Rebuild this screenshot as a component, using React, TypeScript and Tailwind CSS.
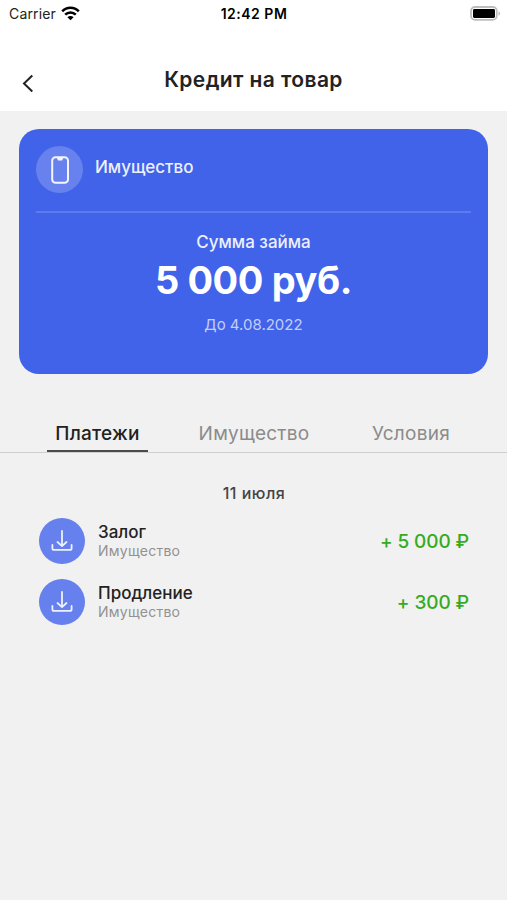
const payments = [
  { amount: "+ 5 000 ₽", id: "pledge", title: "Залог" },
  { amount: "+ 300 ₽", id: "extension", title: "Продление" },
];

const tabs = [
  { label: "Платежи", width: "w-[101px] ml-[47px]" },
  { label: "Имущество", width: "w-[112px] ml-[50px]" },
  { label: "Условия", width: "w-[80px] ml-[61px]" },
];

const WifiIcon = () => (
  <svg className="h-[15px] w-[19px]" fill="none" viewBox="0 0 19 15">
    <path
      d="M1.2 5.3C5.8.6 13.2.6 17.8 5.3M4.2 8.6c2.9-2.9 7.7-2.9 10.6 0"
      stroke="black"
      strokeWidth="2.6"
    />
    <path d="M6.4 11.2c1.8-1.6 4.4-1.6 6.2 0L9.5 14.3z" fill="black" />
  </svg>
);

const BatteryIcon = () => (
  <svg className="h-[15px] w-[31px]" fill="none" viewBox="0 0 31 15">
    <rect
      height="12.8"
      rx="4"
      stroke="#bdbdbd"
      strokeWidth="1.8"
      width="25.8"
      x="1"
      y="1"
    />
    <rect fill="black" height="9" rx="1.4" width="22" x="3" y="3" />
    <path d="M28.5 5.3c2.2.9 2.2 3.5 0 4.4z" fill="#bdbdbd" />
  </svg>
);

const PhoneIcon = () => (
  <svg className="h-7 w-5" fill="none" viewBox="0 0 20 28">
    <rect
      height="25.6"
      rx="3.4"
      stroke="#f3f5ff"
      strokeWidth="2"
      width="15.8"
      x="2.2"
      y="1.2"
    />
    <path d="M6.8 1.5h6.6l-1.2 3.1H8z" fill="#f3f5ff" />
  </svg>
);

const DownloadIcon = () => (
  <svg
    className="h-6 w-6"
    fill="none"
    stroke="#edf1ff"
    strokeLinecap="round"
    strokeLinejoin="round"
    strokeWidth="1.8"
    viewBox="0 0 24 24"
  >
    <path d="M12 2v15M7.5 13l4.5 4.1 4.5-4.1M2.4 16v3.2a1.7 1.7 0 0 0 1.7 1.7h15.8a1.7 1.7 0 0 0 1.7-1.7V16" />
  </svg>
);

const StatusBar = () => (
  <div className="grid h-7 grid-cols-3 items-center pr-[6px] pb-[2px] pl-[9px] text-[14px] text-black">
    <div className="flex items-center gap-[5px]">
      <span className="tracking-[0.15px] text-[#222]">Carrier</span>
      <WifiIcon />
    </div>
    <span className="pr-[2px] text-center font-semibold tracking-[0.5px]">
      12:42 PM
    </span>
    <div className="flex justify-end">
      <BatteryIcon />
    </div>
  </div>
);

const Header = () => (
  <header className="bg-white">
    <StatusBar />
    <div className="grid h-[83px] grid-cols-[64px_1fr_64px] pt-[37px]">
      <button aria-label="Назад" className="flex pt-[9px] pl-[22px]">
        <svg className="h-[19px] w-3" fill="none" viewBox="0 0 12 19">
          <path d="M10.3 1.5 2 9.5l8.3 8" stroke="#222" strokeWidth="2" />
        </svg>
      </button>
      <h1 className="text-center text-[21px] leading-[30px] font-semibold tracking-[0.4px] text-[#222]">
        Кредит на товар
      </h1>
    </div>
  </header>
);

const LoanCard = () => (
  <section className="mx-[19px] mt-[18px] h-[245px] rounded-[20px] bg-[#4163ea] px-[17px] pt-[17px] text-white">
    <div className="flex h-[67px] border-b-2 border-[#5d7bee]">
      <div className="flex size-[47px] items-center justify-center rounded-full bg-[#6782ee]">
        <PhoneIcon />
      </div>
      <span className="ml-3 pt-[9px] text-[17px] leading-6 font-medium text-[#edf0fd]">
        Имущество
      </span>
    </div>
    <div className="flex flex-col items-center">
      <span className="mt-[17px] text-[17px] leading-6 font-medium text-[#edf0fd]">
        Сумма займа
      </span>
      <span className="mt-[2px] text-[38px] leading-[48px] font-bold tracking-[-0.4px]">
        5 000 руб.
      </span>
      <span className="mt-[11px] text-[15px] leading-5 text-[#c3cef9]">
        До 4.08.2022
      </span>
    </div>
  </section>
);

const Tabs = () => (
  <nav className="mt-[45px] flex h-[34px] border-b border-[#cfcfcf]">
    {tabs.map(({ label, width }, index) => (
      <button
        className={`${width} h-[33px] border-b-2 pb-[2px] text-[19px] leading-7 tracking-[0.25px] whitespace-nowrap ${
          index === 0
            ? "border-[#4b4b4b] font-medium text-[#222]"
            : "border-transparent text-[#8b8b8b]"
        }`}
        key={label}
      >
        {label}
      </button>
    ))}
  </nav>
);

const Payments = () => (
  <section className="pt-[28px] pr-[38px] pl-[39px]">
    <h2 className="text-center text-[16px] leading-6 font-medium tracking-[0.5px] text-[#444]">
      11 июля
    </h2>
    <ul className="mt-[12px] flex flex-col gap-[14px]">
      {payments.map(({ amount, id, title }) => (
        <li className="flex h-[47px] items-center" key={id}>
          <div className="flex size-[46px] items-center justify-center rounded-full bg-[#6680ee]">
            <DownloadIcon />
          </div>
          <div className="ml-[13px] flex flex-1 flex-col pt-px">
            <span className="text-[17px] leading-5 font-medium text-[#222]">
              {title}
            </span>
            <span className="text-[14px] leading-[18px] tracking-[0.25px] text-[#929292]">
              Имущество
            </span>
          </div>
          <span className="pt-[3px] text-[19px] font-medium tracking-[-0.1px] text-[#35ab22]">
            {amount}
          </span>
        </li>
      ))}
    </ul>
  </section>
);

export default function App() {
  return (
    <main className="h-[900px] w-[507px] overflow-hidden bg-[#f1f1f1] font-['Inter',sans-serif]">
      <Header />
      <LoanCard />
      <Tabs />
      <Payments />
    </main>
  );
}
